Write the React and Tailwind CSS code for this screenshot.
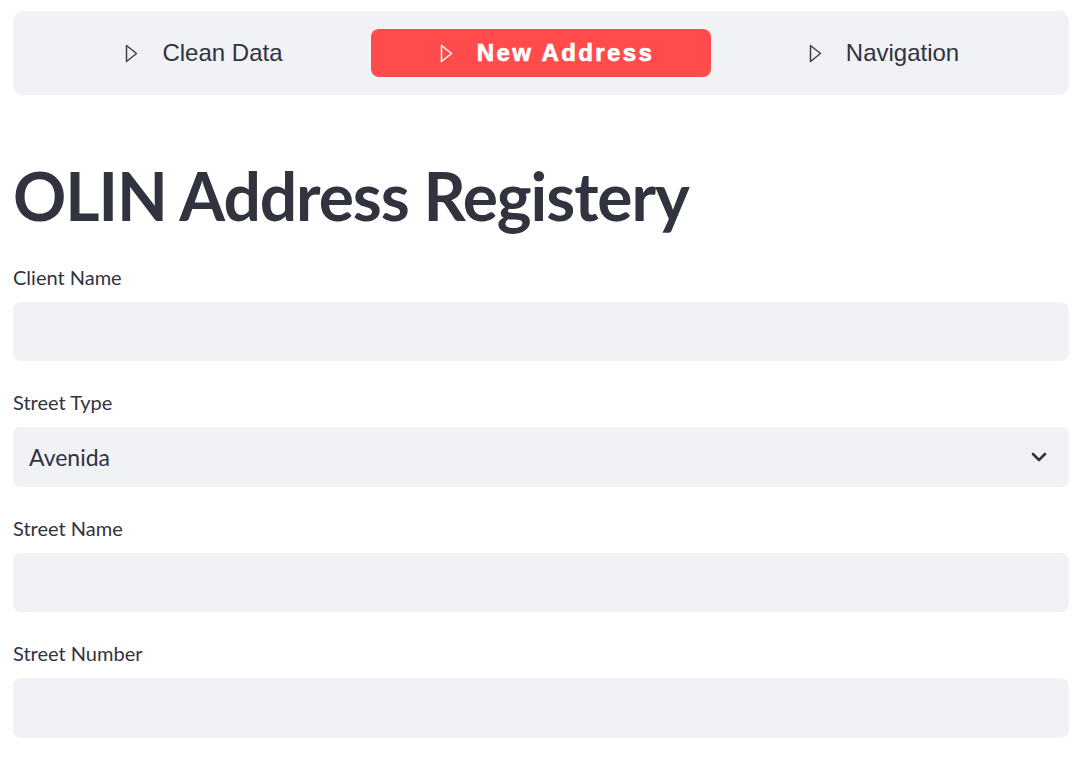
import React from "react";

function PlayIcon({ color }) {
  return (
    <svg width="13" height="19" viewBox="0 0 13 19" fill="none" className="shrink-0">
      <path
        d="M1.5 1.5 L11.5 9.5 L1.5 17.5 Z"
        stroke={color}
        strokeWidth="1.5"
        strokeLinejoin="round"
      />
    </svg>
  );
}

function NavItem({ label, active }) {
  if (active) {
    return (
      <div className="h-[48px] rounded-[8px] bg-[#ff4b4b] flex items-center justify-center gap-[24px] pl-[12px]">
        <PlayIcon color="#ffffff" />
        <span className="text-[24px] font-bold text-white tracking-[2.4px] [-webkit-text-stroke:0.7px_white]">
          {label}
        </span>
      </div>
    );
  }
  return (
    <div className="h-[48px] flex items-center justify-center gap-[24px] pl-[6px]">
      <PlayIcon color="#3d3f4a" />
      <span className="text-[24px] text-[#31333f]">{label}</span>
    </div>
  );
}

function Field({ label, children }) {
  return (
    <div className="flex flex-col">
      <label className="h-[22px] mb-[14px] text-[20px] leading-[22px] text-[#31333f]">
        {label}
      </label>
      {children}
    </div>
  );
}

export default function App() {
  return (
    <div className="min-h-screen bg-white pt-[11px] pl-[13px] pr-[15px] font-['Lato',sans-serif]">
      <nav className="h-[84px] rounded-[10px] bg-[#f0f2f6] p-[18px] grid grid-cols-3 font-['Liberation_Sans',Arial,sans-serif]">
        <NavItem label="Clean Data" />
        <NavItem label="New Address" active />
        <NavItem label="Navigation" />
      </nav>

      <h1 className="mt-[61px] text-[66px] leading-[79px] font-bold text-[#31333f] tracking-[-1.1px]">
        OLIN Address Registery
      </h1>

      <div className="mt-[31px] flex flex-col gap-[30px]">
        <Field label="Client Name">
          <div className="h-[59px] rounded-[8px] bg-[#f0f2f6]" />
        </Field>
        <Field label="Street Type">
          <div className="h-[60px] rounded-[8px] bg-[#f0f2f6] flex items-center justify-between pl-[16px] pr-[22px]">
            <span className="text-[23px] text-[#31333f]">Avenida</span>
            <svg width="16" height="10" viewBox="0 0 16 10" fill="none">
              <path
                d="M2 2 L8 8 L14 2"
                stroke="#31333f"
                strokeWidth="2.6"
                strokeLinecap="round"
                strokeLinejoin="round"
              />
            </svg>
          </div>
        </Field>
        <Field label="Street Name">
          <div className="h-[59px] rounded-[8px] bg-[#f0f2f6]" />
        </Field>
        <Field label="Street Number">
          <div className="h-[60px] rounded-[8px] bg-[#f0f2f6]" />
        </Field>
      </div>
    </div>
  );
}
